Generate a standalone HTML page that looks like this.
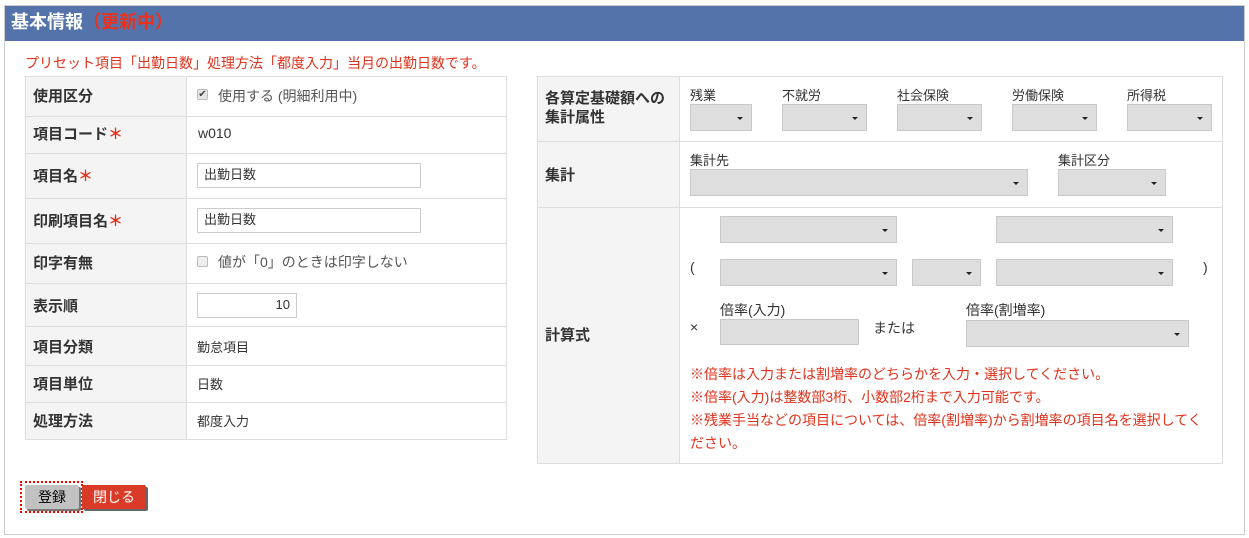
<!DOCTYPE html>
<html><head><meta charset="utf-8"><style>
*{box-sizing:border-box;margin:0;padding:0}
body{width:1249px;height:538px;background:#fff;position:relative;overflow:hidden;font-family:"Liberation Sans","Noto Sans CJK JP",sans-serif;color:#333;font-size:14px}
.a{position:absolute;white-space:nowrap}
.frame{left:4px;top:5px;width:1241px;height:530px;border:1px solid #ccc}
.hdr{left:5px;top:6px;width:1239px;height:35px;background:#5473aa;color:#fff;font-weight:bold;font-size:18px;line-height:32px;padding-left:6px}
.hdr span{color:#e8321e}
.red{color:#e0321c}
.lb{background:#f4f4f4}
.lab{font-weight:bold;font-size:15px;color:#333}
.sel{background:#dedede;border:1px solid #c9c9c9;height:27px}
.sel:after{content:"";position:absolute;right:8px;top:12px;border-left:3px solid transparent;border-right:3px solid transparent;border-top:3px solid #222}
.inp{background:#fff;border:1px solid #ccc;height:25px;font-size:13px;line-height:22px;padding-left:6px}
.h{height:1px;background:#ddd}
.v{width:1px;background:#ddd}
.s{font-size:13px}
</style></head><body>
<div class="a frame"></div>
<div class="a hdr">基本情報<span>（更新中）</span></div>
<div class="a red" style="left:25px;top:53px;font-size:14px">プリセット項目「出勤日数」処理方法「都度入力」当月の出勤日数です。</div>

<div class="a lb" style="left:25px;top:76px;width:161px;height:363px"></div>
<div class="a" style="left:25px;top:76px;width:482px;height:364px;border:1px solid #ddd"></div>
<div class="a v" style="left:186px;top:76px;height:363px"></div>
<div class="a h" style="left:25px;top:116px;width:482px"></div>
<div class="a h" style="left:25px;top:153px;width:482px"></div>
<div class="a h" style="left:25px;top:198px;width:482px"></div>
<div class="a h" style="left:25px;top:243px;width:482px"></div>
<div class="a h" style="left:25px;top:283px;width:482px"></div>
<div class="a h" style="left:25px;top:326px;width:482px"></div>
<div class="a h" style="left:25px;top:365px;width:482px"></div>
<div class="a h" style="left:25px;top:402px;width:482px"></div>
<div class="a lab" style="left:33px;top:85px">使用区分</div>
<div class="a lab" style="left:33px;top:123px">項目コード<span class="red">＊</span></div>
<div class="a lab" style="left:33px;top:165px">項目名<span class="red">＊</span></div>
<div class="a lab" style="left:33px;top:210px">印刷項目名<span class="red">＊</span></div>
<div class="a lab" style="left:33px;top:252px">印字有無</div>
<div class="a lab" style="left:33px;top:295px">表示順</div>
<div class="a lab" style="left:33px;top:336px">項目分類</div>
<div class="a lab" style="left:33px;top:373px">項目単位</div>
<div class="a lab" style="left:33px;top:410px">処理方法</div>
<div class="a" style="left:197px;top:89px;width:11px;height:11px;border:1px solid #bbb;background:#e6e6e6;border-radius:2px;font-size:10px;line-height:9px;text-align:center;color:#444">✔</div>
<div class="a" style="left:218px;top:86px;color:#555">使用する (明細利用中)</div>
<div class="a" style="left:198px;top:125px">w010</div>
<div class="a inp" style="left:197px;top:163px;width:224px">出勤日数</div>
<div class="a inp" style="left:197px;top:208px;width:224px">出勤日数</div>
<div class="a" style="left:197px;top:256px;width:11px;height:11px;border:1px solid #bbb;background:#eee;border-radius:2px"></div>
<div class="a" style="left:218px;top:252px;color:#555">値が「0」のときは印字しない</div>
<div class="a inp" style="left:197px;top:293px;width:100px;text-align:right;padding-right:6px">10</div>
<div class="a s" style="left:197px;top:337px">勤怠項目</div>
<div class="a s" style="left:197px;top:374px">日数</div>
<div class="a s" style="left:197px;top:411px">都度入力</div>

<div class="a lb" style="left:537px;top:76px;width:142px;height:387px"></div>
<div class="a" style="left:537px;top:76px;width:686px;height:388px;border:1px solid #ddd"></div>
<div class="a v" style="left:679px;top:76px;height:387px"></div>
<div class="a h" style="left:537px;top:141px;width:686px"></div>
<div class="a h" style="left:537px;top:207px;width:686px"></div>
<div class="a lab" style="left:545px;top:89px;line-height:19px">各算定基礎額への<br>集計属性</div>
<div class="a lab" style="left:545px;top:164px">集計</div>
<div class="a lab" style="left:545px;top:324px">計算式</div>

<div class="a s" style="left:690px;top:85px">残業</div>
<div class="a s" style="left:782px;top:85px">不就労</div>
<div class="a s" style="left:897px;top:85px">社会保険</div>
<div class="a s" style="left:1012px;top:85px">労働保険</div>
<div class="a s" style="left:1127px;top:85px">所得税</div>
<div class="a sel" style="left:690px;top:104px;width:62px"></div>
<div class="a sel" style="left:782px;top:104px;width:85px"></div>
<div class="a sel" style="left:897px;top:104px;width:85px"></div>
<div class="a sel" style="left:1012px;top:104px;width:85px"></div>
<div class="a sel" style="left:1127px;top:104px;width:85px"></div>

<div class="a s" style="left:690px;top:150px">集計先</div>
<div class="a s" style="left:1058px;top:150px">集計区分</div>
<div class="a sel" style="left:690px;top:169px;width:338px"></div>
<div class="a sel" style="left:1058px;top:169px;width:108px"></div>

<div class="a sel" style="left:720px;top:216px;width:177px"></div>
<div class="a sel" style="left:996px;top:216px;width:177px"></div>
<div class="a" style="left:690px;top:259px">(</div>
<div class="a sel" style="left:720px;top:259px;width:177px"></div>
<div class="a sel" style="left:912px;top:259px;width:69px"></div>
<div class="a sel" style="left:996px;top:259px;width:177px"></div>
<div class="a" style="left:1203px;top:259px">)</div>

<div class="a" style="left:720px;top:300px">倍率(入力)</div>
<div class="a" style="left:966px;top:300px">倍率(割増率)</div>
<div class="a" style="left:690px;top:319px">×</div>
<div class="a" style="left:720px;top:319px;width:139px;height:26px;background:#dedede;border:1px solid #c9c9c9"></div>
<div class="a" style="left:873px;top:318px">または</div>
<div class="a sel" style="left:966px;top:320px;width:223px"></div>
<div class="a red" style="left:690px;top:363px;line-height:23px;font-size:14px">※倍率は入力または割増率のどちらかを入力・選択してください。<br>※倍率(入力)は整数部3桁、小数部2桁まで入力可能です。<br>※残業手当などの項目については、倍率(割増率)から割増率の項目名を選択してく<br>ださい。</div>

<div class="a" style="left:20px;top:481px;width:63px;height:32px;border:2px dotted #f00"></div>
<div class="a" style="left:25px;top:485px;width:54px;height:24px;background:#c2c2c2;border-radius:2px;box-shadow:2px 2px 0 #777;text-align:center;line-height:24px;color:#000">登録</div>
<div class="a" style="left:82px;top:485px;width:64px;height:24px;background:#d93b27;border-radius:2px;box-shadow:2px 2px 0 #666;text-align:center;line-height:24px;color:#fff;font-size:14px">閉じる</div>
</body></html>
